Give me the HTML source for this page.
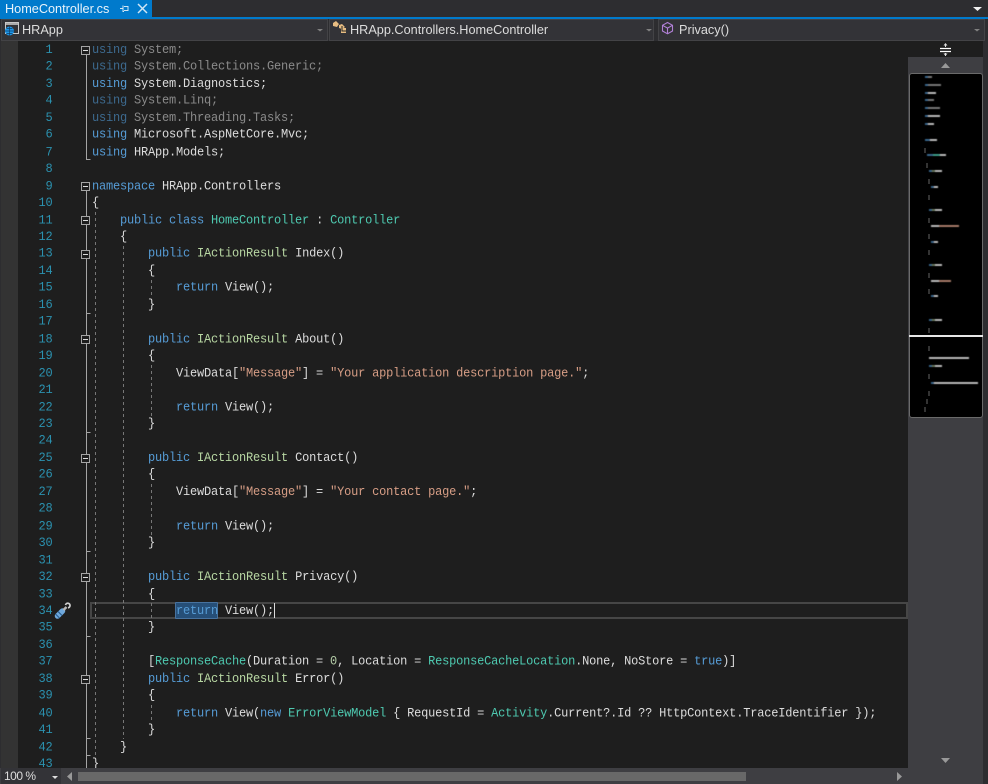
<!DOCTYPE html>
<html><head><meta charset="utf-8"><style>
html,body{margin:0;padding:0;background:#2d2d30;}
#r{position:relative;width:988px;height:784px;overflow:hidden;background:#2d2d30;font-family:"Liberation Sans",sans-serif;}
.a{position:absolute;}
pre{margin:0;position:absolute;font-family:"Liberation Mono","DejaVu Sans Mono",monospace;font-size:12px;letter-spacing:-.2px;line-height:15.4545px;color:#dcdcdc;transform-origin:0 0;transform:scaleY(1.1);}
.k{color:#569cd6}.t{color:#4ec9b0}.i{color:#b8d7a3}.s{color:#d69d85}
.f{color:#8a8a8a}.f .k{color:#3d6a8f}
.nav{font-size:12.7px;color:#dcdcdc;line-height:20px;white-space:nowrap;}
.box{position:absolute;left:81px;width:7px;height:7px;border:1px solid #a5a5a5;background:#1e1e1e;}
.box:after{content:"";position:absolute;left:1px;right:1px;top:3px;height:1px;background:#dcdcdc;}
</style></head><body><div id="r">
<!-- tab -->
<div class="a" style="left:0;top:0;width:152px;height:17px;background:#007acc"></div>
<div class="a" style="left:0;top:17px;width:988px;height:2px;background:#007acc"></div>
<div class="a" style="left:5px;top:0;color:#e8f3fb;font-size:12.7px;line-height:18px;white-space:nowrap">HomeController.cs</div>
<svg class="a" style="left:0;top:0" width="988" height="19">
<path d="M120 8.500h3M123 5.500v6h1M124 6.500h4v4h-4" stroke="#d0e6f5" fill="none"/>
<path d="M138 4l9 9M147 4l-9 9" stroke="#d0e6f5" stroke-width="1.500"/>
<path d="M973 7h9l-4.500 4z" fill="#f1f1f1"/>
</svg>
<!-- nav -->
<div class="a" style="left:1px;top:19px;width:325px;height:20px;background:#333337;border:1px solid #434346"></div>
<div class="a" style="left:329px;top:19px;width:323px;height:20px;background:#333337;border:1px solid #434346"></div>
<div class="a" style="left:658px;top:19px;width:325px;height:20px;background:#333337;border:1px solid #434346"></div>
<svg class="a" style="left:0;top:19px" width="988" height="22">
<rect x="5.500" y="3.500" width="13" height="11" fill="#333337" stroke="#c8c8c8"/><rect x="6" y="4" width="12" height="2" fill="#aaa"/>
<circle cx="9.500" cy="12" r="4.500" fill="#1c97ea"/><path d="M5 12h9M9.500 7.500v9M6.500 9.500h6M6.500 14.500h6" stroke="#0d3d66" stroke-width=".7" fill="none"/>
<path d="M317 10h6l-3 2.500z M646 10h6l-3 2.500z M974 10h6l-3 2.500z" fill="#808080"/>
<path d="M333 4l3-2 3 3-2 3-4-1zM339 6l3-1 3 3-3 2-3-1zM341 9h5v5h-5z" fill="#e8bd82"/><path d="M342 7v5h4" stroke="#222" fill="none"/>
<path d="M667.500 3.500l5 2.800v5.700l-5 2.800-5-2.800v-5.700zM662.500 6.300l5 2.800 5-2.800M667.500 9.100v5.700" stroke="#b180d7" stroke-width="1.100" fill="none"/>
</svg>
<div class="a nav" style="left:22px;top:20px">HRApp</div>
<div class="a nav" style="left:350px;top:20px">HRApp.Controllers.HomeController</div>
<div class="a nav" style="left:679px;top:20px">Privacy()</div>
<!-- editor -->
<div class="a" style="left:18px;top:41px;width:890px;height:727px;background:#1e1e1e"></div>
<div class="a" style="left:1px;top:41px;width:17px;height:727px;background:#333333"></div>
<!-- current line -->
<div class="a" style="left:90px;top:602px;width:814px;height:13px;border:2px solid #464646"></div>
<div class="a" style="left:175px;top:602px;width:41px;height:15px;background:#264f78;border:1px solid #47729f;border-radius:1px"></div>
<div class="a" style="left:274px;top:603px;width:1px;height:15px;background:#dcdcdc"></div>
<!-- guides/outlining -->
<svg class="a" style="left:0;top:0" width="988" height="784">
<g stroke="#a5a5a5" fill="none" shape-rendering="crispEdges">
<path d="M86.500 54V160M86.500 159.500h4M86.500 190V768M86.500 313.500h4M86.500 432.500h4M86.500 551.500h4M86.500 636.500h4M86.500 738.500h4M86.500 755.500h4"/>
</g>
<g stroke="#777" stroke-dasharray="3 3" fill="none" shape-rendering="crispEdges">
<path d="M95.500 212V756M123.500 246V739M151.500 280V296M151.500 365V416M151.500 484V535M151.500 603V620M151.500 705V722"/>
</g>
</svg>
<div class="box" style="top:46px"></div><div class="box" style="top:182px"></div><div class="box" style="top:216px"></div><div class="box" style="top:250px"></div><div class="box" style="top:335px"></div><div class="box" style="top:454px"></div><div class="box" style="top:573px"></div><div class="box" style="top:675px"></div>
<!-- wrench -->
<svg class="a" style="left:50px;top:598px" width="26" height="26">
<path d="M7.500 18l5-5" stroke="#6fa8dc" stroke-width="5.500" stroke-linecap="round"/>
<path d="M5.500 16l4 4M8 13.500l4 4" stroke="#2a5f91" stroke-width="1.200"/>
<path d="M13.500 12l3-3" stroke="#b8b8b8" stroke-width="2.500"/>
<path d="M15.500 7a2.300 2.300 0 1 1 2.500 2.800" stroke="#cfcfcf" stroke-width="1.700" fill="none"/>
</svg>
<!-- numbers -->
<pre style="left:20px;top:42.400px;width:32.500px;text-align:right;color:#2b91af;">1
2
3
4
5
6
7
8
9
10
11
12
13
14
15
16
17
18
19
20
21
22
23
24
25
26
27
28
29
30
31
32
33
34
35
36
37
38
39
40
41
42
43</pre>
<pre style="left:92px;top:42.400px"><span class="f"><span class="k">using</span> System;</span>
<span class="f"><span class="k">using</span> System.Collections.Generic;</span>
<span class="k">using</span> System.Diagnostics;
<span class="f"><span class="k">using</span> System.Linq;</span>
<span class="f"><span class="k">using</span> System.Threading.Tasks;</span>
<span class="k">using</span> Microsoft.AspNetCore.Mvc;
<span class="k">using</span> HRApp.Models;

<span class="k">namespace</span> HRApp.Controllers
{
    <span class="k">public class</span> <span class="t">HomeController</span> : <span class="t">Controller</span>
    {
        <span class="k">public</span> <span class="i">IActionResult</span> Index()
        {
            <span class="k">return</span> View();
        }

        <span class="k">public</span> <span class="i">IActionResult</span> About()
        {
            ViewData[<span class="s">"Message"</span>] = <span class="s">"Your application description page."</span>;

            <span class="k">return</span> View();
        }

        <span class="k">public</span> <span class="i">IActionResult</span> Contact()
        {
            ViewData[<span class="s">"Message"</span>] = <span class="s">"Your contact page."</span>;

            <span class="k">return</span> View();
        }

        <span class="k">public</span> <span class="i">IActionResult</span> Privacy()
        {
            <span class="k">return</span> View();
        }

        [<span class="t">ResponseCache</span>(Duration = <span class="s" style="color:#b5cea8">0</span>, Location = <span class="t">ResponseCacheLocation</span>.None, NoStore = <span class="k">true</span>)]
        <span class="k">public</span> <span class="i">IActionResult</span> Error()
        {
            <span class="k">return</span> View(<span class="k">new</span> <span class="t">ErrorViewModel</span> { RequestId = <span class="t">Activity</span>.Current?.Id ?? HttpContext.TraceIdentifier });
        }
    }
}</pre>
<!-- right scrollbar -->
<div class="a" style="left:908px;top:41px;width:75px;height:727px;background:#3e3e42"></div>
<div class="a" style="left:908px;top:41px;width:75px;height:16px;background:#1e1e1e"></div>
<svg class="a" style="left:908px;top:41px" width="75" height="727">
<path d="M32 7.500h11M32 10.500h11" stroke="#fff" stroke-width="1.300"/>
<path d="M37.500 3v3M37.500 12v3" stroke="#ddd"/><path d="M35.500 4.500l2-2.500 2 2.500zM35.500 12.500l2 2.500 2-2.500z" fill="#ddd"/>
<path d="M33 27l4.500-5 4.500 5z" fill="#999"/>
<path d="M33 717h9l-4.500 5z" fill="#999"/>
</svg>
<div class="a" style="left:909px;top:73px;width:72px;height:343px;background:#000;border:1px solid #6a6a6a;border-radius:3px;box-sizing:content-box"></div>
<svg class="a" style="left:909px;top:74px" width="74" height="344">
<defs><filter id="b"><feGaussianBlur stdDeviation=".45"/></filter></defs>
<g filter="url(#b)" stroke-width="1.500" fill="none">
<g stroke="#4a86b8"><path d="M16 3h3M16 11h3M16 19h3M16 26h3M16 34h3M16 42h3M16 50h3M16 66h5M18 81h6M20 97h3M20 136h3M20 191h3M20 246h3M20 292h3M22 113h3M22 168h3M22 222h3M22 309h3"/></g>
<g stroke="#9a9a9a"><path d="M19 3h4M19 11h13M19 26h6M19 34h12"/></g>
<g stroke="#f0f0f0"><path d="M19 19h8M19 42h12M19 50h6M21 66h7M31 81h6M26 97h7M26 136h7M26 191h7M26 246h7M26 292h7M25 113h4M25 168h4M25 222h4M22 152h8M22 207h8M20 284h40M25 309h44"/></g>
<g stroke="#4ec9b0"><path d="M24 81h7"/></g>
<g stroke="#b8d7a3" opacity=".7"><path d="M23 97h3M23 136h3M23 191h3M23 246h3M23 292h3"/></g>
<g stroke="#d69d85"><path d="M30 152h20M30 207h12"/></g>
</g>
<g stroke="#666" stroke-width="1" fill="none"><path d="M16 74v5M18 89v5M20 105v5M20 121v5M20 144v5M20 160v5M20 176v5M20 199v5M20 215v5M20 254v5M20 272v5M20 300v5M20 317v5M18 325v5M16 333v5"/></g>
<rect x="0" y="261" width="74" height="2" fill="#e6e6e6"/>
</svg>
<!-- bottom bar -->
<div class="a" style="left:0;top:768px;width:988px;height:16px;background:#3e3e42"></div>
<div class="a" style="left:1px;top:768px;width:60px;height:16px;background:#333337"></div>
<div class="a" style="left:4px;top:768px;color:#dcdcdc;font-size:12px;letter-spacing:-.5px;line-height:17px">100 %</div>
<div class="a" style="left:78px;top:772px;width:668px;height:9px;background:#686868"></div>
<div class="a" style="left:983px;top:41px;width:5px;height:743px;background:#2d2d30"></div>
<svg class="a" style="left:0;top:768px" width="988" height="16">
<path d="M72 4v9l-5-4.500zM897 4v9l5-4.500z" fill="#999"/>
<path d="M52 8h6l-3 3z" fill="#ddd"/>
</svg>
</div></body></html>
